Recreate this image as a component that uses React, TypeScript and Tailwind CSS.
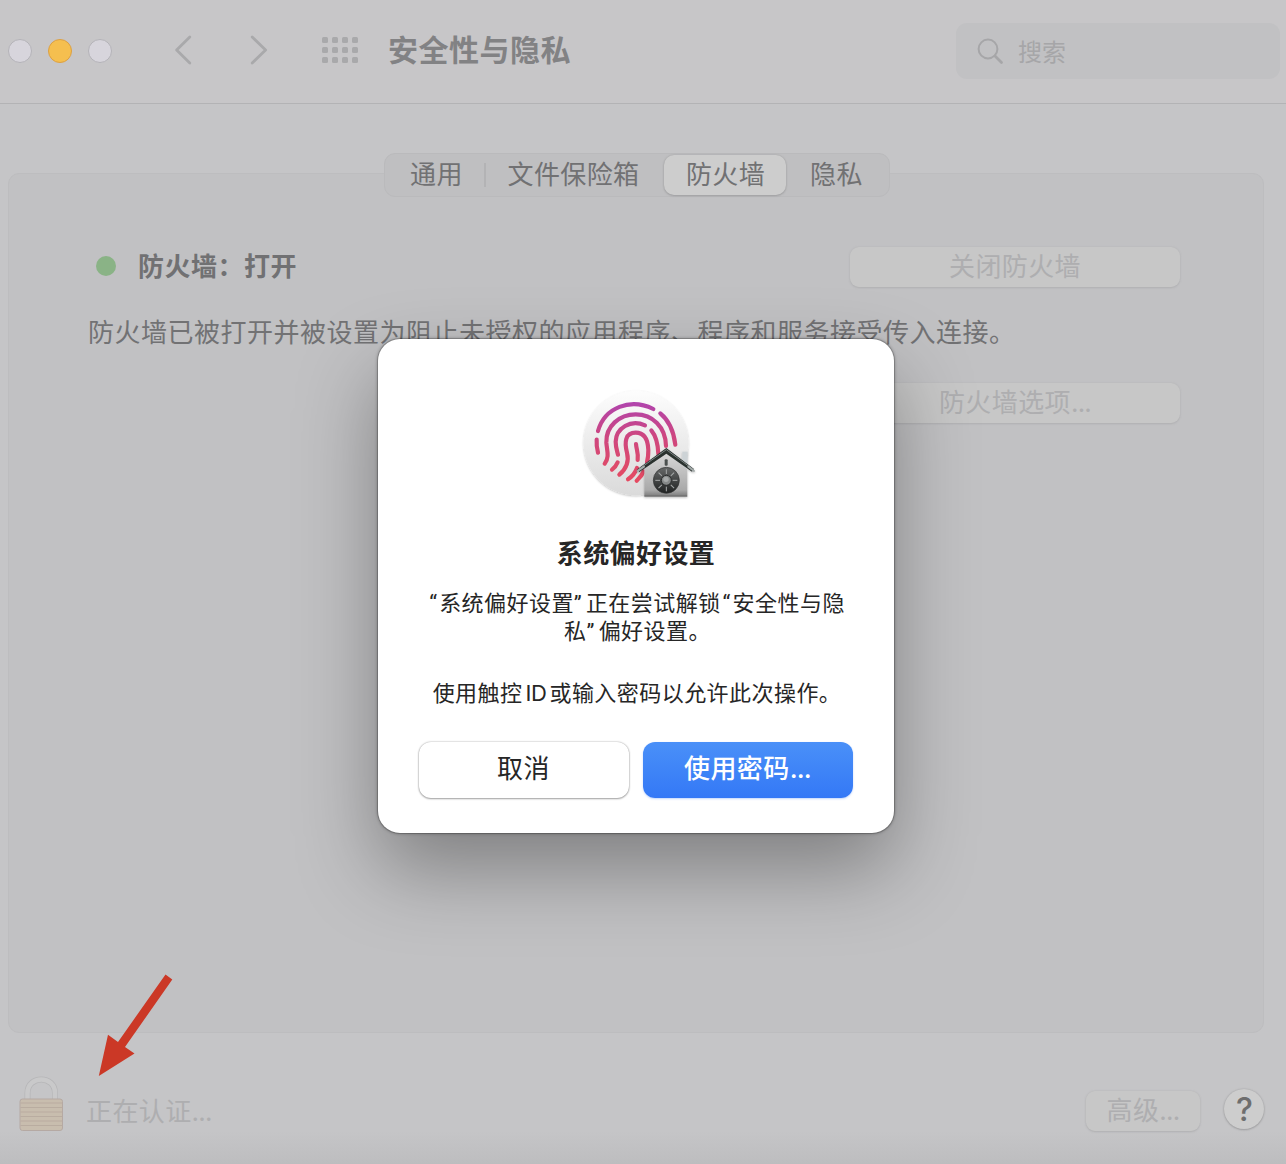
import React from "react";

const CJK = "font-['Noto_Sans_CJK_SC',sans-serif]";

function Toolbar() {
  return (
    <header className="flex h-[104px] shrink-0 items-center border-b border-[#b3b3b5] bg-[#c7c6c8] pb-[1px] pl-2">
      <div className="flex gap-4">
        <span className="size-6 rounded-full border border-[#b4b3b8] bg-[#d7d5dc]" />
        <span className="size-6 rounded-full border border-[#dca043] bg-[#f5bf4f]" />
        <span className="size-6 rounded-full border border-[#b4b3b8] bg-[#d7d5dc]" />
      </div>
      <svg className="ml-[61px]" width="22" height="32" viewBox="0 0 22 32" fill="none" stroke="#a9a9ab" strokeWidth="2.8" strokeLinecap="round" strokeLinejoin="round">
        <path d="M16.8 2 L3.6 15 L16.8 28" />
      </svg>
      <svg className="ml-[53px]" width="22" height="32" viewBox="0 0 22 32" fill="none" stroke="#a9a9ab" strokeWidth="2.8" strokeLinecap="round" strokeLinejoin="round">
        <path d="M4.2 2 L17.6 15 L4.2 28" />
      </svg>
      <div className="mt-[-2px] ml-[52px] grid grid-cols-4 gap-[4px]">
        {Array.from({ length: 12 }, (_, i) => (
          <span key={i} className="size-[6px] rounded-[1.5px] bg-[#a9a9ab]" />
        ))}
      </div>
      <h1 className="ml-[30px] pb-[7px] text-[30px] leading-[40px] font-bold tracking-[0.5px] text-[#828284]">安全性与隐私</h1>
      <div className="mr-[6px] ml-auto flex h-14 w-[324px] items-center rounded-[11px] bg-[#c1c1c3] pl-[21px] text-[24px] text-[#a6a6a8]">
        <svg width="27" height="28" viewBox="0 0 27 28" fill="none" stroke="#a6a6a8" strokeLinecap="round">
          <circle cx="11" cy="12" r="9.4" strokeWidth="2" />
          <path d="M18 19 L24.5 25.5" strokeWidth="2.8" />
        </svg>
        <span className="ml-[14px] leading-8">搜索</span>
      </div>
    </header>
  );
}

function Tabs() {
  return (
    <div className="-mt-[21px] ml-[375px] flex h-[44px] w-[506px] items-center rounded-[11px] border border-[#bababc] bg-[#bfbfc1] text-[26px] leading-[36px] tracking-[0.4px] text-[#717173]">
      <div className="w-[99px] pb-[5px] pl-[4px] text-center">通用</div>
      <div className="h-[24px] w-[2px] bg-[#b3b3b5]" />
      <div className="w-[178px] pr-[3px] pb-[5px] text-center">文件保险箱</div>
      <div className="h-10 w-[122px] rounded-[10px] bg-[#cdcdcd] pl-[1px] text-center leading-[35px] shadow-[0_0_2px_#a0a0a2,0_1px_2px_#a0a0a2]">防火墙</div>
      <div className="w-[101px] pb-[5px] text-center">隐私</div>
    </div>
  );
}

function DimButton({ className, children }: { className: string; children: React.ReactNode }) {
  return (
    <div className={"h-10 rounded-[9px] bg-[#c7c7c7] text-center text-[26px] leading-[36px] tracking-[0.4px] text-[#aeaeb0] shadow-[0_0_2px_#b5b5b7,0_1px_2px_#b0b0b2] " + className}>
      {children}
    </div>
  );
}

function Dots() {
  return <span className="font-[Inter,sans-serif] leading-none tracking-[-0.8px]">...</span>;
}

function Lock() {
  return (
    <svg width="46" height="56" viewBox="0 0 46 56">
      <path d="M9.5 24 V17 C9.5 -1 37 -1 37 17 V24" fill="none" stroke="#b6b6b8" strokeWidth="6" />
      <path d="M9.5 24 V17 C9.5 -1 37 -1 37 17 V24" fill="none" stroke="#c9c9ca" strokeWidth="4.6" />
      <rect x="2" y="23" width="42.5" height="31.5" rx="2.5" fill="#c8bdae" stroke="#b5a9a3" />
      {[27, 31.5, 36, 40.5, 45, 49.5].map((y) => (
        <path key={y} d={`M2.5 ${y}H44`} stroke="#b9aca0" strokeWidth="1.2" />
      ))}
    </svg>
  );
}

function TouchIdIcon() {
  return (
    <svg width="140" height="130" viewBox="0 0 420 390">
      <defs>
        <linearGradient id="disc" x1="0" y1="0" x2="0" y2="1">
          <stop offset="0" stopColor="#fdfdfd" />
          <stop offset="1" stopColor="#dadada" />
        </linearGradient>
        <linearGradient id="print" gradientUnits="userSpaceOnUse" x1="0" y1="65" x2="0" y2="310">
          <stop offset="0" stopColor="#b044ae" />
          <stop offset="0.4" stopColor="#cc4682" />
          <stop offset="0.75" stopColor="#dc4a6c" />
          <stop offset="1" stopColor="#e64a60" />
        </linearGradient>
        <linearGradient id="house" x1="0" y1="0" x2="0" y2="1">
          <stop offset="0" stopColor="#d9d9d9" />
          <stop offset="0.85" stopColor="#a9a9a9" />
          <stop offset="1" stopColor="#777777" />
        </linearGradient>
        <linearGradient id="dial" x1="0" y1="0" x2="0" y2="1">
          <stop offset="0" stopColor="#666868" />
          <stop offset="1" stopColor="#202222" />
        </linearGradient>
        <filter id="soft" x="-20%" y="-20%" width="140%" height="140%">
          <feDropShadow dx="0" dy="3" stdDeviation="3" floodOpacity="0.25" />
        </filter>
      </defs>
      <circle cx="198" cy="189" r="157" fill="url(#disc)" filter="url(#soft)" />
      <g fill="none" stroke="url(#print)" strokeWidth="12.5" strokeLinecap="round">
        <path d="M84 153 C104 82 181 53 250 87" />
        <path d="M271 100 C298 122 311 152 316 194" />
        <path d="M80 179 C79 194 81 207 84 218" />
        <path d="M288 198 C287 140 247 103 197 103 C148 103 107 139 109 188 C111 212 119 232 104 251" />
        <path d="M225 136 C182 116 138 145 137 185 C137 203 141 212 144 224" />
        <path d="M143 247 C139 257 133 264 126 269" />
        <path d="M244 151 C258 168 264 188 265 222" />
        <path d="M148 284 C170 265 178 245 171 218 C163 187 165 158 197 158 C226 158 234 181 235 210 C235 227 234 236 231 246" />
        <path d="M198 192 C199 209 206 219 203 240" />
        <path d="M201 264 C196 278 186 290 174 298" />
        <path d="M221 274 C215 288 208 294 200 302" />
      </g>
      <g filter="url(#soft)">
        <path d="M337 215 h16 v48 h-16z" fill="#cdd3d6" />
        <path d="M223 268 L289 216 L352 268 V350 H223z" fill="url(#house)" />
        <path d="M224 347 H351" stroke="#747474" strokeWidth="4" />
        <path d="M289 204 L372 267 L366 275 L289 221 L208 276 L202 268z" fill="#29312f" />
        <path d="M203 270 L289 209 L372 270" fill="none" stroke="#7c8583" strokeWidth="3" />
        <path d="M203 273 L222 260 M355 260 L372 273" stroke="#a3aaa9" strokeWidth="6" strokeLinecap="round" />
      </g>
      <rect x="284" y="238" width="9" height="19" rx="3" fill="#4b504f" />
      <circle cx="289" cy="301" r="39" fill="url(#dial)" stroke="#303232" strokeWidth="2" />
      {[0, 45, 90, 135, 180, 225, 270, 315].map((a) => (
        <path key={a} d="M289 268 V282" stroke="#a6a9a9" strokeWidth="3" transform={`rotate(${a} 289 301)`} />
      ))}
      <circle cx="289" cy="301" r="15" fill="#858888" stroke="#2b2d2d" strokeWidth="3" />
      <circle cx="288" cy="298" r="8" fill="#a6a9a9" />
    </svg>
  );
}

function OpenQuote() {
  return <span className="mr-[1px] ml-[2px] font-[Roboto,sans-serif] text-[22px] leading-none tracking-[1.2px]">“</span>;
}

function CloseQuote() {
  return <span className="mr-[3px] font-[Roboto,sans-serif] text-[22px] leading-none tracking-[1.2px]">”</span>;
}

function AuthDialog() {
  return (
    <div className="absolute top-[339px] left-[378px] flex h-[494px] w-[516px] flex-col items-center rounded-[22px] bg-white pt-[41px] text-[#262626] shadow-[0_0_0_1px_rgba(0,0,0,0.16),0_0_3px_1px_rgba(0,0,0,0.25),0_36px_80px_rgba(0,0,0,0.34)]">
      <div className="w-[132px]">
        <TouchIdIcon />
      </div>
      <h2 className="mt-[22px] text-[26px] leading-[40px] font-bold tracking-[0.4px]">系统偏好设置</h2>
      <div className="mt-[15px] flex flex-col items-center text-[22px] leading-[28px] tracking-[0.45px] whitespace-nowrap">
        <p><OpenQuote />系统偏好设置<CloseQuote />正在尝试解锁<OpenQuote />安全性与隐</p>
        <p className="pl-[3px]">私<CloseQuote />偏好设置。</p>
      </div>
      <p className="mt-[34px] pl-[2px] text-[22px] leading-[28px] tracking-[0.45px] whitespace-nowrap">
        使用触控<span className="mx-[3px] font-[Inter,sans-serif] leading-none tracking-[-0.4px]">ID</span>或输入密码以允许此次操作。
      </p>
      <div className="mt-auto mb-[35px] flex gap-[14px] pr-[1px] text-[26px] leading-[50px] tracking-[0.4px]">
        <button className="h-14 w-[210px] rounded-[12px] bg-white pb-[6px] shadow-[0_0_2px_rgba(0,0,0,0.35),0_1px_2px_rgba(0,0,0,0.3)]">取消</button>
        <button className="h-14 w-[210px] rounded-[12px] bg-linear-to-b from-[#4a90f8] to-[#3478f6] pb-[6px] font-medium text-white shadow-[0_1px_2px_rgba(52,120,246,0.3)]">使用密码<Dots /></button>
      </div>
    </div>
  );
}

export default function App() {
  return (
    <div lang="zh-CN" className={"relative flex h-[1164px] w-[1286px] flex-col overflow-hidden bg-[#c5c5c7] " + CJK}>
      <Toolbar />
      <main className="mt-[69px] ml-2 h-[860px] w-[1256px] shrink-0 rounded-[11px] border border-[#bdbdbf] bg-[#c1c1c3]">
        <Tabs />
        <div className="mt-[50px] flex h-10 items-center pl-[87px]">
          <span className="mt-[-2px] size-5 rounded-full bg-[#8ab386]" />
          <span className="ml-[22px] pb-[5px] text-[26px] leading-[38px] font-bold tracking-[0.5px] text-[#717173]">防火墙：打开</span>
          <DimButton className="mr-[83px] ml-auto w-[330px]">关闭防火墙</DimButton>
        </div>
        <p className="mt-[25px] ml-[79px] text-[26px] leading-[38px] tracking-[0.5px] whitespace-nowrap text-[#727274]">
          防火墙已被打开并被设置为阻止未授权的应用程序、程序和服务接受传入连接。
        </p>
        <DimButton className="mt-[33px] ml-[841px] w-[330px]">防火墙选项<Dots /></DimButton>
      </main>
      <footer className="flex flex-1 bg-linear-to-b from-[#c5c5c7] from-75% to-[#bdbdbf] pl-[18px]">
        <div className="mt-[43px]">
          <Lock />
        </div>
        <span className="mt-[58px] ml-[22px] text-[26px] leading-[38px] tracking-[0.4px] text-[#aeaeb0]">正在认证<Dots /></span>
        <DimButton className="mt-[58px] ml-auto w-[114px]">高级<Dots /></DimButton>
        <div className="mt-14 mr-[22px] ml-6 size-10 rounded-full bg-[#cdcdcd] pl-[1px] text-center font-[Inter,sans-serif] text-[32px] leading-[41px] font-medium text-[#6e6e6e] shadow-[0_0_2px_#a0a0a2,0_1px_2px_#a0a0a2]">?</div>
      </footer>
      <AuthDialog />
      <svg className="absolute top-[970px] left-[94px]" width="84" height="110" viewBox="0 0 84 110">
        <path d="M71.5 4.5 L78.3 9.5 L31 77 L40.5 83.5 L4.8 106 L14 64.8 L24 72z" fill="#cb3826" />
      </svg>
    </div>
  );
}
